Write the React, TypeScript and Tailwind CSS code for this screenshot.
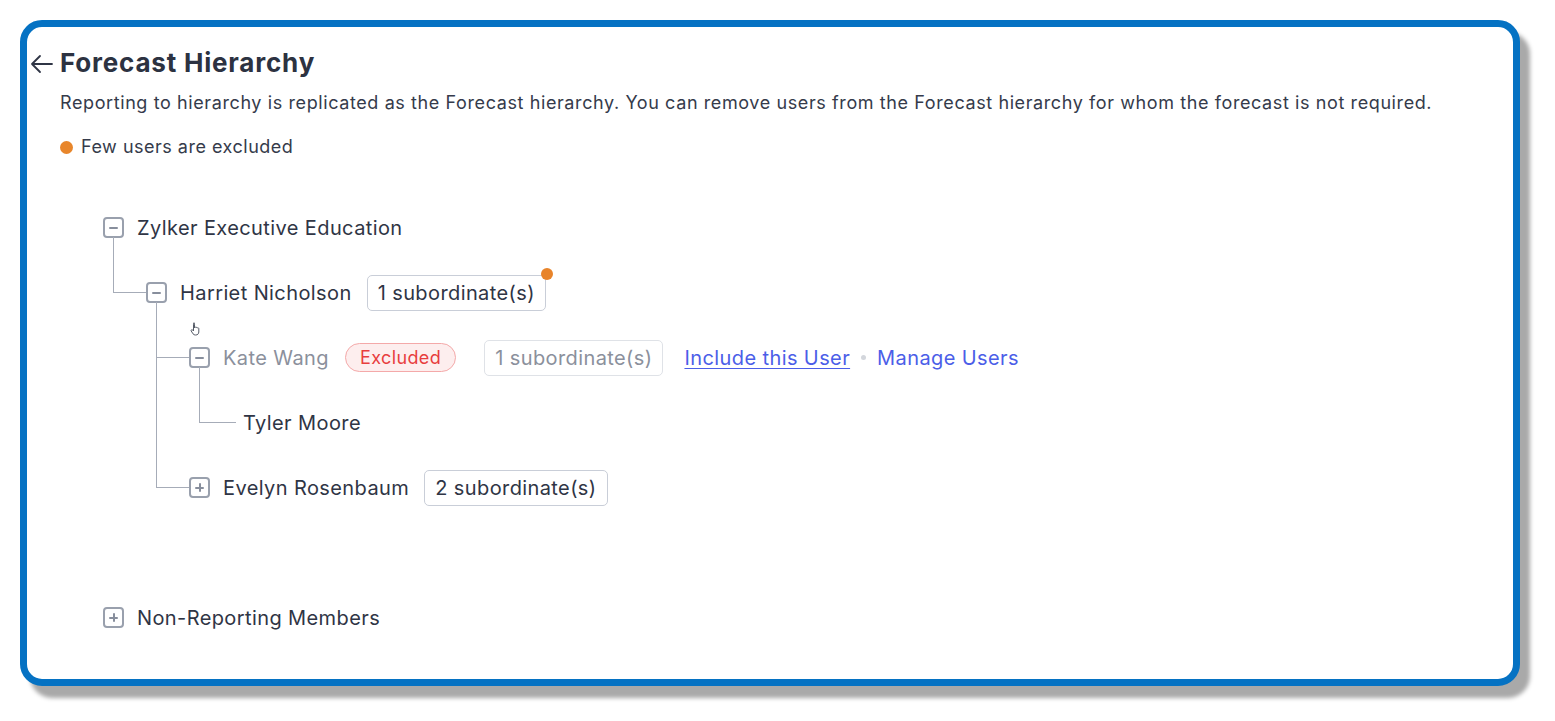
import React from "react";

const font = { fontFamily: "Inter, 'Noto Sans', 'Liberation Sans', sans-serif" };

function Box({ minus }: { minus?: boolean }) {
  return (
    <span className="relative flex h-[21px] w-[21px] shrink-0 items-center justify-center rounded-[4px] border-2 border-[#99a0ad] bg-white">
      <span className="absolute h-[2px] w-[9px] rounded bg-[#878e9c]" />
      {!minus && <span className="absolute h-[9px] w-[2px] rounded bg-[#878e9c]" />}
    </span>
  );
}

function Elbow({ top, height, width }: { top: number; height: number; width: number }) {
  return (
    <span
      className="pointer-events-none absolute border-b-[1.5px] border-l-[1.5px] border-[#a6acb8]"
      style={{ left: -width, top, width, height }}
    />
  );
}

function Badge({ children, faded, dot }: { children: React.ReactNode; faded?: boolean; dot?: boolean }) {
  return (
    <span
      className={`relative flex h-[36px] items-center rounded-[5px] border bg-white px-[10px] text-[20px] tracking-[0.4px] ${
        faded ? "border-[#dfe2e7] text-[#8b909c]" : "border-[#c9ced8] text-[#2f3545]"
      }`}
    >
      {children}
      {dot && <span className="absolute right-[-8px] top-[-8px] h-[12px] w-[12px] rounded-full bg-[#e8842a]" />}
    </span>
  );
}

export default function App() {
  return (
    <div className="min-h-[721px] w-[1555px] bg-white" style={font}>
      <div className="pl-[20px] pt-[20px]">
        <div className="relative h-[666px] w-[1500px] rounded-[22px] border-[7px] border-[#0572c3] bg-white shadow-[10px_12px_4px_#a9a9a9]">
          {/* header */}
          <div className="flex items-center pl-[3px] pt-[18px]">
            <svg width="24" height="20" viewBox="0 0 24 20" className="mr-[6px] mt-[2px]">
              <path d="M22 10H2M10 2L2 10L10 18" fill="none" stroke="#2f3545" strokeWidth="1.8" strokeLinecap="round" strokeLinejoin="round" />
            </svg>
            <h1 className="text-[26px] font-bold leading-[36px] tracking-[0.8px] text-[#2c3241]">Forecast Hierarchy</h1>
          </div>
          <p className="ml-[33px] mt-[8px] text-[18px] leading-[28px] tracking-[0.6px] text-[#353b4b]">
            Reporting to hierarchy is replicated as the Forecast hierarchy. You can remove users from the Forecast hierarchy for whom the forecast is not required.
          </p>
          <div className="ml-[33px] mt-[18px] flex items-center gap-[8px] text-[18px] leading-[24px] tracking-[0.5px] text-[#353b4b]">
            <span className="h-[13px] w-[13px] rounded-full bg-[#e8862b]" />
            Few users are excluded
          </div>

          {/* tree */}
          <div className="relative ml-[76px] mt-[36px] flex flex-col text-[20px] tracking-[0.4px] text-[#2f3545]">
            <div className="flex h-[65px] items-center">
              <Box minus />
              <span className="ml-[13px]">Zylker Executive Education</span>
            </div>

            <div className="ml-[43px] flex h-[65px] items-center">
              <span className="relative">
                <Elbow top={-45} height={56} width={33} />
                <Box minus />
              </span>
              <span className="ml-[13px]">Harriet Nicholson</span>
              <span className="ml-[15px]">
                <Badge dot>1 subordinate(s)</Badge>
              </span>
            </div>

            <div className="ml-[86px] flex h-[65px] items-center">
              <span className="relative">
                <Elbow top={-45} height={56} width={33} />
                <svg width="12" height="14" viewBox="0 0 12 14" className="absolute left-[1px] top-[-25px]">
                  <path
                    d="M3.5 1.2c.6 0 1 .4 1 1V6l.1-.6c.5-.5 1.3-.3 1.4.3.4-.5 1.3-.4 1.4.3.4-.4 1.3-.2 1.4.5V10c0 1.8-1.3 3-3 3H5.2c-.9 0-1.6-.4-2.1-1.1L1.2 9c-.3-.5-.1-1.1.4-1.3.4-.2.9 0 1.1.3l.8 1V2.2c0-.6.4-1 1-1z"
                    fill="#fff"
                    stroke="#555b67"
                    strokeWidth="1"
                  />
                </svg>
                <Box minus />
              </span>
              <span className="ml-[13px] text-[#8b909c]">Kate Wang</span>
              <span className="ml-[16px] flex h-[29px] items-center rounded-full border border-[#f4a9a9] bg-[#fdeeee] px-[14px] text-[18px] text-[#e83e3e]">
                Excluded
              </span>
              <span className="ml-[28px]">
                <Badge faded>1 subordinate(s)</Badge>
              </span>
              <a className="ml-[21px] cursor-pointer text-[#4b5ee8] underline decoration-1 underline-offset-[3px]">Include this User</a>
              <span className="mx-[11px] h-[5px] w-[5px] rounded-full bg-[#d3d6dc]" />
              <a className="cursor-pointer text-[#4b5ee8]">Manage Users</a>
            </div>

            <div className="ml-[96px] flex h-[65px] items-center">
              <span className="relative h-[1.5px] w-[37px]">
                <Elbow top={-55} height={56} width={0} />
                <span className="absolute left-0 top-0 h-[1.5px] w-[37px] bg-[#a6acb8]" />
              </span>
              <span className="ml-[7px]">Tyler Moore</span>
            </div>

            <div className="ml-[86px] flex h-[65px] items-center">
              <span className="relative">
                <Elbow top={-175} height={186} width={33} />
                <Box />
              </span>
              <span className="ml-[13px]">Evelyn Rosenbaum</span>
              <span className="ml-[15px]">
                <Badge>2 subordinate(s)</Badge>
              </span>
            </div>

            <div className="h-[65px]" />

            <div className="flex h-[65px] items-center">
              <Box />
              <span className="ml-[13px]">Non-Reporting Members</span>
            </div>
          </div>
        </div>
      </div>
    </div>
  );
}
